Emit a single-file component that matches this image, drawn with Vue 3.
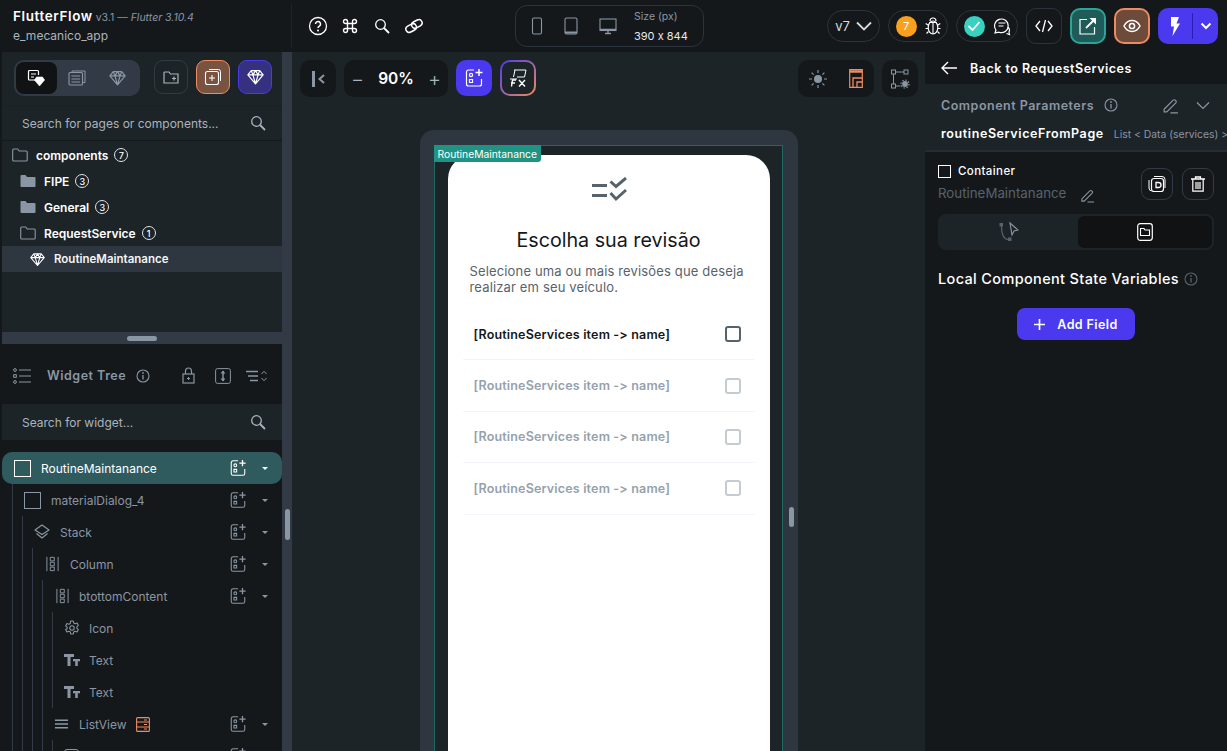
<template>
  <div class="app">
    <!-- shared icons -->
    <svg class="defs" width="0" height="0">
      <defs>
        <symbol id="i-add" viewBox="0 0 20 20">
          <path d="M10 2H4.500A2 2 0 0 0 2.500 4v12a2 2 0 0 0 2 2h11a2 2 0 0 0 2-2v-5" fill="none" stroke="currentColor" stroke-width="1.200" />
          <path d="M15 1v7M11.500 4.500h7" fill="none" stroke="currentColor" stroke-width="1.500" />
          <circle cx="7" cy="7" r="1.600" fill="none" stroke="currentColor" stroke-width="1.200" />
          <path d="M5.500 11.500h3v3h-3z" fill="none" stroke="currentColor" stroke-width="1.200" />
        </symbol>
        <symbol id="i-search" viewBox="0 0 16 16">
          <circle cx="6.500" cy="6.500" r="4.800" fill="none" stroke="currentColor" stroke-width="1.300" />
          <path d="M10 10l5 5" stroke="currentColor" stroke-width="1.800" />
        </symbol>
        <symbol id="i-gem" viewBox="0 0 20 18">
          <path d="M5 1.500h10l4 5-9 10.500L1 6.500zM1 6.500h18M7 6.500l3 10.500 3-10.500M5 1.500l2 5 3-5 3 5 2-5" fill="none" stroke="currentColor" stroke-width="1.400" stroke-linejoin="round" />
        </symbol>
        <symbol id="i-info" viewBox="0 0 14 14">
          <circle cx="7" cy="7" r="6" fill="none" stroke="currentColor" stroke-width="1.100" />
          <path d="M7 6v4.500" stroke="currentColor" stroke-width="1.300" />
          <circle cx="7" cy="3.900" r="0.900" fill="currentColor" />
        </symbol>
        <symbol id="i-folder" viewBox="0 0 16 14">
          <path d="M.7 2a1 1 0 0 1 1-1h4l1.500 2h7a1 1 0 0 1 1 1v8a1 1 0 0 1-1 1H1.700a1 1 0 0 1-1-1z" fill="none" stroke="currentColor" stroke-width="1.100" />
        </symbol>
        <symbol id="i-folder-fill" viewBox="0 0 16 14">
          <path d="M.5 2a1 1 0 0 1 1-1h4l1.500 2h7.500a1 1 0 0 1 1 1v8a1 1 0 0 1-1 1h-13a1 1 0 0 1-1-1z" fill="currentColor" />
        </symbol>
        <symbol id="i-pencil" viewBox="0 0 16 16">
          <path d="M2 11.500L10.500 3a1.400 1.400 0 0 1 2 0l.5.500a1.400 1.400 0 0 1 0 2L4.500 14H2zM8 15h7" fill="none" stroke="currentColor" stroke-width="1.100" />
        </symbol>
        <symbol id="i-column" viewBox="0 0 14 18">
          <path d="M.7 1v16M13.300 1v16" stroke="currentColor" stroke-width="1.100" />
          <path d="M4.500 1.500h4.500v4H4.500zM4.500 7h4.500v4H4.500zM4.500 12.500h4.500v4H4.500z" fill="none" stroke="currentColor" stroke-width="1.100" />
        </symbol>
        <symbol id="i-text" viewBox="0 0 16 12">
          <path d="M0 0h10v3H6.500v9h-3V3H0zM9 5h7v2.200h-2.200V12h-2.600V7.200H9z" fill="currentColor" />
        </symbol>
        <symbol id="i-stack" viewBox="0 0 16 16">
          <path d="M8 1l7 5-7 4.500L1 6zM2.500 9.500L8 14l5.500-4.500" fill="none" stroke="currentColor" stroke-width="1.200" stroke-linejoin="round" />
        </symbol>
        <symbol id="i-gear" viewBox="0 0 16 16">
          <circle cx="8" cy="8" r="2.200" fill="none" stroke="currentColor" stroke-width="1.100" />
          <path d="M6.700 1h2.600l.4 2 1.500.8 1.900-.7 1.300 2.300-1.500 1.300v1.600l1.500 1.300-1.300 2.300-1.900-.7-1.500.8-.4 2H6.700l-.4-2-1.500-.8-1.900.7-1.300-2.300L3.100 8.800V7.200L1.600 5.900l1.300-2.300 1.900.7 1.500-.8z" fill="none" stroke="currentColor" stroke-width="1.100" stroke-linejoin="round" />
        </symbol>
        <symbol id="i-list" viewBox="0 0 16 10">
          <path d="M1 1h14M1 5h14M1 9h14" stroke="currentColor" stroke-width="1.500" />
        </symbol>
      </defs>
    </svg>

    <header class="topbar">
      <div class="brand">
        <div class="brand-line">
          <span class="brand-name">FlutterFlow</span>
          <span class="brand-version">v3.1 — <em>Flutter 3.10.4</em></span>
        </div>
        <div class="brand-project">e_mecanico_app</div>
      </div>
      <div class="top-tools">
        <svg width="20" height="20" viewBox="0 0 20 20"><circle cx="10" cy="10" r="8.500" fill="none" stroke="currentColor" stroke-width="1.300" /><path d="M7.500 8a2.500 2.500 0 1 1 3.800 2.100c-.9.600-1.300 1-1.300 2" fill="none" stroke="currentColor" stroke-width="1.500" /><circle cx="10" cy="14.500" r="1" fill="currentColor" /></svg>
        <svg width="16" height="16" viewBox="0 0 16 16"><path d="M5.500 5.500h5v5h-5zM5.500 5.500H3.500a2 2 0 1 1 2-2zM10.500 5.500V3.500a2 2 0 1 1 2 2zM10.500 10.500h2a2 2 0 1 1-2 2zM5.500 10.500v2a2 2 0 1 1-2-2z" fill="none" stroke="currentColor" stroke-width="1.400" /></svg>
        <svg class="top-search" width="16" height="16"><use href="#i-search" /></svg>
        <svg width="20" height="16" viewBox="0 0 20 16"><g fill="none" stroke="currentColor" stroke-width="1.500" transform="rotate(-28 10 8)"><rect x="1" y="5.200" width="11" height="6.600" rx="3.300" /><rect x="8" y="4.200" width="11" height="6.600" rx="3.300" /></g></svg>
      </div>
      <div class="device-box">
        <svg width="12" height="18" viewBox="0 0 12 18"><rect x="1.500" y="1" width="9" height="16" rx="1.500" fill="none" stroke="currentColor" stroke-width="1.100" /></svg>
        <svg width="14" height="18" viewBox="0 0 14 18"><rect x="1" y="1" width="12" height="16" rx="1.500" fill="none" stroke="currentColor" stroke-width="1.100" /><path d="M1 15.500h12" stroke="currentColor" stroke-width="2" /></svg>
        <svg width="18" height="18" viewBox="0 0 18 18"><rect x="1" y="2" width="16" height="11.500" fill="none" stroke="currentColor" stroke-width="1.100" /><path d="M1 12.500h16M9 13.500v3M6 16.500h6" stroke="currentColor" stroke-width="1.300" /></svg>
        <div class="device-size">
          <span>Size (px)</span>
          <strong>390 x 844</strong>
        </div>
      </div>
      <div class="top-actions">
        <div class="pill version">v7
          <svg width="16" height="10" viewBox="0 0 16 10"><path d="M1 1.500l7 7 7-7" fill="none" stroke="currentColor" stroke-width="1.800" /></svg>
        </div>
        <div class="pill debug">
          <span class="count">7</span>
          <svg width="16" height="20" viewBox="0 0 16 20"><ellipse cx="8" cy="11.500" rx="4.800" ry="6.500" fill="none" stroke="currentColor" stroke-width="1.200" /><path d="M4.500 6.500h7M8 6.500V18M5 5a3 3 0 0 1 6 0M3 9L.7 7.500M13 9l2.300-1.500M3 12.500H.5M13 12.500h2.500M3.500 15.500L1.500 17.500M12.500 15.500l2 2" fill="none" stroke="currentColor" stroke-width="1.100" /></svg>
        </div>
        <div class="pill check">
          <span class="tick">
            <svg width="14" height="12" viewBox="0 0 14 12"><path d="M1.500 6l4 4 7-8" fill="none" stroke="#fff" stroke-width="1.800" /></svg>
          </span>
          <svg width="18" height="20" viewBox="0 0 18 20"><path d="M3 14a6.800 6.800 0 1 1 3 2.200L2 17zM5.500 7h7M5.500 10h5M15 11c2 2 1.500 4 1 5l.5 2.500-3-1" fill="none" stroke="currentColor" stroke-width="1.200" /></svg>
        </div>
        <div class="square code">
          <svg width="18" height="14" viewBox="0 0 18 14"><path d="M5 2L1 7l4 5M13 2l4 5-4 5M10.500 1l-3 12" fill="none" stroke="currentColor" stroke-width="1.300" /></svg>
        </div>
        <div class="square teal">
          <svg width="18" height="18" viewBox="0 0 18 18"><path d="M8 2.500H1v14.500h14.500v-7" fill="none" stroke="currentColor" stroke-width="1.200" /><path d="M7 11L15 3" stroke="currentColor" stroke-width="1.800" /><path d="M10.500 1H17v6.500z" fill="currentColor" /></svg>
        </div>
        <div class="square orange">
          <svg width="18" height="14" viewBox="0 0 18 14"><path d="M1 7c2-3.800 5-5.500 8-5.500s6 1.700 8 5.500c-2 3.800-5 5.500-8 5.500S3 10.800 1 7z" fill="none" stroke="currentColor" stroke-width="1.500" /><circle cx="9" cy="7" r="2.600" fill="none" stroke="currentColor" stroke-width="1.500" /></svg>
        </div>
        <div class="run">
          <span class="run-main">
            <svg width="10" height="19" viewBox="0 0 10 19"><path d="M1 0h8L6.500 6.500H10L2.500 19 4 9.500H1z" fill="#fff" /></svg>
          </span>
          <span class="run-more">
            <svg width="12" height="8" viewBox="0 0 12 8"><path d="M1.500 1.500L6 6l4.500-4.500" fill="none" stroke="#fff" stroke-width="2" /></svg>
          </span>
        </div>
      </div>
    </header>

    <div class="workspace">
      <aside class="left">
        <div class="left-inner">
          <div class="nav-tools">
            <div class="segment">
              <span class="seg active">
                <svg width="18" height="18" viewBox="0 0 18 18"><path d="M10 11H2.500a1 1 0 0 1-1-1V2.500a1 1 0 0 1 1-1h8a1 1 0 0 1 1 1V6M4 5h5M4 8h3" fill="none" stroke="#fff" stroke-width="1.200" /><path d="M9.500 8h6L17.500 11 12.500 17 7.500 11zM7.500 11h10" fill="#fff" stroke="#fff" stroke-width=".6" /></svg>
              </span>
              <span class="seg">
                <svg width="18" height="16" viewBox="0 0 18 16"><path d="M4 2.500V1h13v11.500h-2" fill="none" stroke="currentColor" stroke-width="1" /><rect x="1" y="2.500" width="13.500" height="12.500" rx="1" fill="none" stroke="currentColor" stroke-width="1.100" /><path d="M3.500 6h8.500M3.500 9h8.500M3.500 12h8.500" stroke="currentColor" stroke-width="1.100" /></svg>
              </span>
              <span class="seg">
                <svg width="17" height="16"><use href="#i-gem" /></svg>
              </span>
            </div>
            <span class="tool-btn outline">
              <svg width="16" height="13" viewBox="0 0 16 13"><path d="M1 2a1 1 0 0 1 1-1h4l1.500 2H15v9H1z" fill="none" stroke="currentColor" stroke-width="1.200" /><path d="M11 5.500v4M9 7.500h4" stroke="currentColor" stroke-width="1.200" /></svg>
            </span>
            <span class="tool-btn tint-orange">
              <svg width="18" height="18" viewBox="0 0 18 18"><path d="M5 1.500h9.500a2 2 0 0 1 2 2V13" fill="none" stroke="#fff" stroke-width="1" /><rect x="1.500" y="3.500" width="13" height="13" rx="2" fill="none" stroke="#fff" stroke-width="1.100" /><path d="M8 7v6M5 10h6" stroke="#fff" stroke-width="1.100" /></svg>
            </span>
            <span class="tool-btn tint-purple">
              <svg width="17" height="16" class="white"><use href="#i-gem" /></svg>
            </span>
          </div>
          <div class="search-row">
            <span>Search for pages or components...</span>
            <svg width="16" height="16"><use href="#i-search" /></svg>
          </div>
          <div class="pages">
            <div v-for="f in folders" :key="f.name" class="folder-row" :class="[f.kind]">
              <svg v-if="f.kind === 'comp'" width="15" height="15" class="gem"><use href="#i-gem" /></svg>
              <svg v-else width="16" height="14" class="folder"><use :href="f.filled ? '#i-folder-fill' : '#i-folder'" /></svg>
              <span class="folder-name">{{ f.name }}</span>
              <span v-if="f.count" class="badge">{{ f.count }}</span>
            </div>
          </div>
          <div class="h-split"><span></span></div>
          <div class="tree-head">
            <svg width="18" height="16" viewBox="0 0 18 16"><path d="M6 2h12M6 8h12M6 14h12" stroke="currentColor" stroke-width="1" /><circle cx="2" cy="2" r="1.400" fill="none" stroke="currentColor" /><rect x=".7" y="6.700" width="2.600" height="2.600" fill="none" stroke="currentColor" /><circle cx="2" cy="14" r="1.400" fill="none" stroke="currentColor" /></svg>
            <span class="tree-title">Widget Tree</span>
            <svg class="info" width="14" height="14"><use href="#i-info" /></svg>
            <div class="tree-head-tools">
              <svg width="13" height="17" viewBox="0 0 13 17"><path d="M3.500 7V4a3 3 0 0 1 6 0v3" fill="none" stroke="currentColor" stroke-width="1.200" /><rect x="1" y="7" width="11" height="9" fill="none" stroke="currentColor" stroke-width="1.200" /><path d="M5 11.500h3M6.500 10v3" stroke="currentColor" stroke-width="1" /></svg>
              <svg width="16" height="16" viewBox="0 0 16 16"><rect x=".6" y=".6" width="14.800" height="14.800" rx="2" fill="none" stroke="currentColor" stroke-width="1" /><path d="M8 3v10" stroke="currentColor" stroke-width="1.500" /><path d="M5.500 5.500L8 2.500l2.500 3zM5.500 10.500L8 13.500l2.500-3z" fill="currentColor" /></svg>
              <svg class="sort" width="21" height="12" viewBox="0 0 21 12"><path d="M0 1.500h12M2 6h10M4 10.500h8" stroke="currentColor" stroke-width="1.500" /><path d="M15.500 4l2.500-2.700L20.500 4M15.500 8l2.500 2.700L20.500 8" fill="none" stroke="currentColor" /></svg>
            </div>
          </div>
          <div class="search-row second">
            <span>Search for widget...</span>
            <svg width="16" height="16"><use href="#i-search" /></svg>
          </div>
          <div class="tree">
            <div v-for="row in widgetRows" :key="row.top" class="tree-row" :class="{ selected: row.selected }">
              <span v-for="n in row.guides" :key="n" class="guide"></span>
              <span class="tree-icon" :style="{ width: iconSlot(row.guides) + 'px' }">
                <span v-if="row.icon === 'box'" class="box-icon"></span>
                <span v-else-if="row.icon === 'tile'" class="tile-icon"></span>
                <svg v-else-if="row.icon === 'stack'" width="16" height="16"><use href="#i-stack" /></svg>
                <svg v-else-if="row.icon === 'column'" class="column-icon" width="13" height="16"><use href="#i-column" /></svg>
                <svg v-else-if="row.icon === 'gear'" width="16" height="16"><use href="#i-gear" /></svg>
                <svg v-else-if="row.icon === 'text'" width="16" height="12"><use href="#i-text" /></svg>
                <svg v-else-if="row.icon === 'list'" width="15" height="10"><use href="#i-list" /></svg>
              </span>
              <span class="tree-name">{{ row.name }}</span>
              <svg v-if="row.flag" class="flag" width="14" height="15" viewBox="0 0 14 15"><rect x=".6" y=".6" width="12.800" height="13.800" rx="1" fill="none" stroke="#ee8b60" stroke-width="1.100" /><path d="M.6 5h12.800M.6 10h12.800M8 3h3M8 7.500h3M8 12h3" stroke="#ee8b60" stroke-width="1" /></svg>
              <template v-if="row.add">
                <svg class="row-add" width="18" height="18"><use href="#i-add" /></svg>
                <span class="caret"></span>
              </template>
            </div>
          </div>
        </div>
        <div class="v-split"><span></span></div>
      </aside>

      <main class="canvas">
        <div class="canvas-tools">
          <div class="tool-group square-tool">
            <svg width="14" height="16" viewBox="0 0 14 16"><path d="M1 0h3v16H1z" fill="#8a96a3" /><path d="M13 4L8.500 8l4.500 4" fill="none" stroke="#8a96a3" stroke-width="2" /></svg>
          </div>
          <div class="tool-group zoom">
            <span class="zoom-sign">−</span>
            <strong>90%</strong>
            <span class="zoom-sign">+</span>
          </div>
          <div class="add-widget">
            <svg width="20" height="20" class="white"><use href="#i-add" /></svg>
          </div>
          <div class="fx-btn">
            <svg width="20" height="20" viewBox="0 0 20 20"><path d="M6 2h12l-1.500 7H9M7 2L5.500 9M13 2v0M2 11h7" fill="none" stroke="#fff" stroke-width="1" /><path d="M8 12H4.500l-1 6.500M3 15h4M11 12l6 6.500M17 12l-6 6.500" fill="none" stroke="#fff" stroke-width="1.400" /></svg>
          </div>
          <div class="canvas-right">
            <div class="tool-group theme">
              <svg width="18" height="18" viewBox="0 0 18 18"><circle cx="9" cy="9" r="4" fill="#8a96a3" /><path d="M9 0v3M9 15v3M0 9h3M15 9h3M2.600 2.600l2 2M13.400 13.400l2 2M2.600 15.400l2-2M13.400 4.600l2-2" stroke="#8a96a3" stroke-width="1.200" /></svg>
              <svg width="14" height="19" viewBox="0 0 14 19"><path d="M.7.700h12.600v17.600H.7z" fill="none" stroke="#ee8b60" stroke-width="1.200" /><path d="M.7 2.500h12.600" stroke="#ee8b60" stroke-width="2.500" /><path d="M4 18V9h9.300M8 18v-5h5.300" fill="none" stroke="#ee8b60" stroke-width="1.300" /></svg>
            </div>
            <div class="tool-group square-tool">
              <svg width="20" height="20" viewBox="0 0 20 20"><path d="M3.500 5v10M5.500 3h8.500" stroke="#8a96a3" stroke-width="1" /><rect x="1.500" y="1" width="4" height="4" fill="none" stroke="#8a96a3" /><rect x="14" y="1" width="4" height="4" fill="none" stroke="#8a96a3" /><rect x="1.500" y="15" width="4" height="4" fill="none" stroke="#8a96a3" /><path d="M5.500 17h5" stroke="#8a96a3" /><circle cx="15" cy="15" r="2.900" fill="#8a96a3" /><circle cx="15" cy="15" r="4" fill="none" stroke="#8a96a3" stroke-width="1.200" stroke-dasharray="1.500 1.600" /></svg>
            </div>
          </div>
        </div>

        <div class="device">
          <div class="selection">
            <span class="selection-tag">RoutineMaintanance</span>
            <div class="sheet">
              <svg class="sheet-icon" width="36" height="26" viewBox="0 0 36 26">
                <path d="M1 8.500h15M1 18.500h15" stroke="#57636c" stroke-width="3" />
                <path d="M19.500 4.500l5.500 5L35 1M19.500 16l5.500 6L35 13" fill="none" stroke="#57636c" stroke-width="3" />
              </svg>
              <h1>Escolha sua revisão</h1>
              <p>Selecione uma ou mais revisões que deseja realizar em seu veículo.</p>
              <div class="service-list">
                <div v-for="(s, i) in services" :key="i" class="service" :class="{ dim: i > 0 }">
                  <span>{{ s }}</span>
                  <i class="checkbox"></i>
                </div>
              </div>
            </div>
          </div>
        </div>
        <span class="canvas-handle"></span>
      </main>

      <aside class="right">
        <div class="back-row">
          <svg width="16" height="14" viewBox="0 0 16 14"><path d="M7 1L1 7l6 6M1 7h15" fill="none" stroke="#fff" stroke-width="1.400" /></svg>
          <span>Back to RequestServices</span>
        </div>
        <div class="params">
          <div class="params-head">
            <span class="params-title">Component Parameters</span>
            <svg width="14" height="14" class="info"><use href="#i-info" /></svg>
            <svg width="17" height="17" class="pencil"><use href="#i-pencil" /></svg>
            <svg width="14" height="9" viewBox="0 0 14 9" class="chev"><path d="M1 1.500l6 6 6-6" fill="none" stroke="currentColor" stroke-width="1.200" /></svg>
          </div>
          <div class="param-line">
            <strong>routineServiceFromPage</strong>
            <span>List &lt; Data (services) &gt;</span>
          </div>
        </div>
        <div class="container-row">
          <div class="container-info">
            <div class="container-type"><span class="box-small"></span>Container</div>
            <div class="container-name">RoutineMaintanance
              <svg width="15" height="15"><use href="#i-pencil" /></svg>
            </div>
          </div>
          <span class="small-btn">
            <svg width="18" height="18" viewBox="0 0 18 18"><path d="M6 1.500h8a3 3 0 0 1 3 3V13" fill="none" stroke="#fff" stroke-width="1" /><rect x="3.500" y="3.500" width="12" height="13" rx="2.500" fill="none" stroke="#fff" stroke-width="1.200" /><path d="M1 5v8a3 3 0 0 0 2.500 3" fill="none" stroke="#fff" stroke-width="1" /><path d="M8 7.500h2.500a2 2 0 0 1 0 5H8z" fill="none" stroke="#fff" stroke-width="1.300" /></svg>
          </span>
          <span class="small-btn">
            <svg width="14" height="16" viewBox="0 0 14 16"><path d="M0 3h14M4.500 3V1h5v2" fill="none" stroke="#fff" stroke-width="1.300" /><path d="M1.800 3v12.200h10.400V3M5 6v7M7 6v7M9 6v7" fill="none" stroke="#fff" stroke-width="1.200" /></svg>
          </span>
        </div>
        <div class="tabs">
          <span class="tab first">
            <svg width="20" height="20" viewBox="0 0 20 20"><rect x=".5" y="1" width="3.500" height="3.500" fill="#57636c" /><rect x="9" y="15.500" width="3.500" height="3.500" fill="#57636c" /><path d="M2.500 4c0 7 2 13 6.500 13.500" fill="none" stroke="#57636c" stroke-width="1.100" /><path d="M11 1l8 7-4 1-2 4z" fill="none" stroke="#8a96a3" stroke-width="1.100" /></svg>
          </span>
          <span class="tab active">
            <svg width="16" height="18" viewBox="0 0 16 18"><rect x=".7" y=".7" width="14.600" height="16.600" rx="2.500" fill="none" stroke="#fff" stroke-width="1.200" /><path d="M3.500 7V5.500h3.500L8 7h4.500v5.500h-9z" fill="none" stroke="#fff" stroke-width="1.100" /></svg>
          </span>
        </div>
        <div class="state-title">
          Local Component State Variables
          <svg width="14" height="14" class="info"><use href="#i-info" /></svg>
        </div>
        <div class="add-field-wrap">
          <button class="add-field">
            <svg width="11" height="11" viewBox="0 0 11 11"><path d="M5.500 0v11M0 5.500h11" stroke="#fff" stroke-width="1.700" /></svg>
            Add Field
          </button>
        </div>
      </aside>
    </div>
  </div>
</template>

<script setup>
const folders = [
  { name: "components", count: 7, kind: "top" },
  { name: "FIPE", count: 3, kind: "sub", filled: true },
  { name: "General", count: 3, kind: "sub", filled: true },
  { name: "RequestService", count: 1, kind: "sub" },
  { name: "RoutineMaintanance", kind: "comp" },
];

const widgetRows = [
  { name: "RoutineMaintanance", guides: 0, icon: "box", add: true, selected: true, top: 0 },
  { name: "materialDialog_4", guides: 1, icon: "box", add: true, top: 1 },
  { name: "Stack", guides: 2, icon: "stack", add: true, top: 2 },
  { name: "Column", guides: 3, icon: "column", add: true, top: 3 },
  { name: "btottomContent", guides: 4, icon: "column", add: true, top: 4 },
  { name: "Icon", guides: 5, icon: "gear", top: 5 },
  { name: "Text", guides: 5, icon: "text", top: 6 },
  { name: "Text", guides: 5, icon: "text", top: 7 },
  { name: "ListView", guides: 4, icon: "list", add: true, flag: true, top: 8 },
  // cut off by the bottom of the window
  { name: "", guides: 5, icon: "tile", add: true, top: 9 },
];

const services = Array(4).fill("[RoutineServices item -> name]");

// labels creep left a little on deeper levels
function iconSlot(guides) {
  if (guides >= 4) return 27;
  if (guides >= 2) return 28;
  return 29;
}
</script>

<style>
html,
body {
  margin: 0;
  background: #14181b;
  overflow: hidden;
}
</style>

<style scoped>
.app {
  width: 1227px;
  height: 751px;
  overflow: hidden;
  display: flex;
  flex-direction: column;
  background: #14181b;
  color: #fff;
  font-family: Inter, "Noto Sans", sans-serif;
  font-size: 13px;
  font-feature-settings: "calt" 0;
}
.defs {
  position: absolute;
}
svg {
  display: block;
  flex: none;
}
.white {
  color: #fff;
}

/* top bar */
.topbar {
  height: 52px;
  flex: none;
  display: flex;
  align-items: center;
  background: #14181b;
}
.brand {
  width: 292px;
  height: 44px;
  flex: none;
  box-sizing: border-box;
  padding: 4px 0 0 13px;
  border-right: 1px solid #1e252a;
}
.brand-line {
  display: flex;
  align-items: baseline;
  gap: 3px;
}
.brand-name {
  font-size: 13.500px;
  font-weight: 600;
  letter-spacing: 0.6px;
}
.brand-version {
  font-size: 10.500px;
  color: #8a96a3;
}
.brand-project {
  margin-top: 4px;
  font-size: 12px;
  color: #aab4bd;
}
.top-tools {
  width: 223px;
  flex: none;
  box-sizing: border-box;
  padding-left: 16px;
  display: flex;
  align-items: center;
  gap: 14px;
  color: #fff;
}
.top-search {
  margin-left: 2px;
}
.device-box {
  width: 189px;
  height: 42px;
  flex: none;
  box-sizing: border-box;
  border: 1px solid #2b333c;
  border-radius: 12px;
  display: flex;
  align-items: center;
  padding-left: 15px;
  gap: 21px;
  color: #8a96a3;
}
.device-size {
  display: flex;
  flex-direction: column;
  gap: 6px;
  font-size: 10.500px;
  margin-left: -4px;
}
.device-size strong {
  font-weight: 400;
  color: #e6e9ec;
  font-size: 11px;
}
.top-actions {
  margin-left: 123px;
  display: flex;
  align-items: center;
  gap: 8px;
}
.pill {
  height: 32px;
  box-sizing: border-box;
  border: 1px solid #2b333c;
  border-radius: 16px;
  display: flex;
  align-items: center;
  justify-content: center;
  gap: 6px;
}
.version {
  width: 53px;
  font-size: 13px;
  color: #d5dade;
}
.debug {
  width: 60px;
  gap: 8px;
}
.check {
  width: 62px;
  gap: 8px;
}
.count {
  width: 21px;
  height: 21px;
  border-radius: 50%;
  background: #f9a11f;
  font-size: 11px;
  display: flex;
  align-items: center;
  justify-content: center;
}
.tick {
  width: 21px;
  height: 21px;
  border-radius: 50%;
  background: #39d2c0;
  display: flex;
  align-items: center;
  justify-content: center;
}
.square {
  width: 36px;
  height: 36px;
  box-sizing: border-box;
  border-radius: 10px;
  display: flex;
  align-items: center;
  justify-content: center;
}
.code {
  border: 1px solid #2b333c;
}
.teal {
  background: #1f5b58;
  border: 2px solid #2aa596;
}
.orange {
  background: #6d4a3a;
  border: 2px solid #ee8b60;
}
.run {
  width: 60px;
  height: 36px;
  border-radius: 10px;
  background: #4b39ef;
  display: flex;
  align-items: center;
}
.run-main {
  width: 34px;
  display: flex;
  justify-content: center;
}
.run-more {
  height: 26px;
  flex: 1;
  border-left: 1px solid #2a1db0;
  display: flex;
  align-items: center;
  justify-content: center;
}

.workspace {
  flex: 1;
  min-height: 0;
  display: flex;
}

/* left column */
.left {
  width: 292px;
  flex: none;
  display: flex;
  box-sizing: border-box;
  padding-left: 2px;
}
.left-inner {
  width: 280px;
  display: flex;
  flex-direction: column;
  background: #1d2428;
}
.v-split {
  width: 10px;
  background: #323b45;
  position: relative;
}
.v-split span {
  position: absolute;
  left: 3px;
  top: 457px;
  width: 5px;
  height: 31px;
  border-radius: 3px;
  background: #8a96a3;
}
.nav-tools {
  height: 54px;
  flex: none;
  box-sizing: border-box;
  padding: 8px 0 0 12px;
  display: flex;
  gap: 8px;
  align-items: flex-start;
  border-bottom: 1px solid #1a2024;
}
.segment {
  width: 126px;
  height: 36px;
  box-sizing: border-box;
  padding: 2px;
  border-radius: 10px;
  background: #323b45;
  display: flex;
  margin-right: 6px;
  color: #8a96a3;
}
.seg {
  width: 41px;
  display: flex;
  align-items: center;
  justify-content: center;
  border-radius: 8px;
}
.seg.active {
  background: #101214;
}
.tool-btn {
  width: 34px;
  height: 34px;
  box-sizing: border-box;
  border-radius: 9px;
  display: flex;
  align-items: center;
  justify-content: center;
}
.outline {
  border: 1px solid #323b45;
  color: #aab4bd;
}
.tint-orange {
  background: #7a5240;
  border: 1.500px solid #ee8b60;
}
.tint-purple {
  background: #35307f;
  border: 1.500px solid #4b39ef;
}
.search-row {
  height: 35px;
  flex: none;
  box-sizing: border-box;
  padding: 0 16px 0 20px;
  display: flex;
  align-items: center;
  justify-content: space-between;
  color: #aab4bd;
  font-size: 12px;
  border-bottom: 1px solid #14181b;
}
.search-row.second {
  height: 36px;
  border-bottom: none;
}
.pages {
  height: 191px;
  flex: none;
  box-sizing: border-box;
  padding-top: 1px;
}
.folder-row {
  height: 26px;
  display: flex;
  align-items: center;
  font-size: 12px;
  font-weight: 600;
}
.folder {
  color: #8a96a3;
}
.folder-row.top {
  padding-left: 10px;
}
.folder-row.sub {
  padding-left: 18px;
}
.folder-row.comp {
  padding-left: 28px;
  background: #2e3640;
  color: #f3f5f6;
}
.folder-name {
  margin-left: 8px;
}
.comp .folder-name {
  margin-left: 9px;
  font-size: 11.500px;
}
.gem {
  color: #fff;
}
.badge {
  width: 14px;
  height: 14px;
  margin-left: 6px;
  box-sizing: border-box;
  border: 1px solid #dfe3e6;
  border-radius: 50%;
  font-size: 9px;
  font-weight: 500;
  display: flex;
  align-items: center;
  justify-content: center;
}
.h-split {
  height: 12px;
  flex: none;
  background: #323b45;
  display: flex;
  align-items: center;
  justify-content: center;
}
.h-split span {
  width: 30px;
  height: 5px;
  border-radius: 3px;
  background: #8a96a3;
}
.tree-head {
  height: 60px;
  flex: none;
  box-sizing: border-box;
  padding: 3px 0 0 11px;
  display: flex;
  align-items: center;
  background: #14181b;
  color: #8a96a3;
}
.tree-title {
  margin-left: 16px;
  font-weight: 600;
  font-size: 12.500px;
  letter-spacing: 0.5px;
}
.info {
  color: #8a96a3;
  margin-left: 10px;
}
.tree-head-tools {
  margin-left: 32px;
  display: flex;
  align-items: center;
  gap: 20px;
}
.sort {
  margin-left: -5px;
}
.tree {
  flex: 1;
  min-height: 0;
  overflow: hidden;
  background: #14181b;
  padding-top: 12px;
}
.tree-row {
  height: 32px;
  display: flex;
  align-items: stretch;
  padding-left: 10px;
  padding-right: 14px;
  color: #8a96a3;
}
.tree-row.selected {
  background: #2f5a5e;
  border-radius: 10px;
  color: #fff;
}
.guide {
  width: 10px;
  flex: none;
  box-sizing: border-box;
  border-left: 1px solid #323b45;
}
.tree-icon {
  flex: none;
  box-sizing: border-box;
  padding-left: 2px;
  display: flex;
  align-items: center;
}
.box-icon {
  width: 17px;
  height: 17px;
  box-sizing: border-box;
  border: 1px solid currentColor;
}
.tile-icon {
  width: 15px;
  height: 15px;
  box-sizing: border-box;
  border: 1px solid currentColor;
  border-radius: 3px;
}
.column-icon {
  margin-left: 2px;
}
.tree-name {
  align-self: center;
  font-size: 12px;
}
.flag {
  align-self: center;
  margin-left: 9px;
}
.row-add {
  align-self: center;
  margin-left: auto;
  margin-right: 15px;
}
.caret {
  align-self: center;
  width: 0;
  height: 0;
  border-left: 3.500px solid transparent;
  border-right: 3.500px solid transparent;
  border-top: 3.500px solid currentColor;
}

/* canvas */
.canvas {
  flex: 1;
  min-width: 0;
  background: #1d2428;
  position: relative;
  display: flex;
  flex-direction: column;
  align-items: center;
  overflow: hidden;
}
.canvas-tools {
  align-self: stretch;
  flex: none;
  height: 78px;
  box-sizing: border-box;
  padding: 8px 7px 0 8px;
  display: flex;
  align-items: flex-start;
  gap: 8px;
}
.tool-group {
  height: 37px;
  border-radius: 10px;
  background: #14181b;
  display: flex;
  align-items: center;
  justify-content: center;
}
.square-tool {
  width: 36px;
}
.zoom {
  width: 104px;
  justify-content: space-between;
  box-sizing: border-box;
  padding: 0 7px;
}
.zoom strong {
  font-size: 15.500px;
  font-weight: 600;
}
.zoom-sign {
  font-size: 20px;
  font-weight: 300;
  color: #aab4bd;
}
.add-widget {
  width: 36px;
  height: 36px;
  border-radius: 10px;
  background: #4b39ef;
  display: flex;
  align-items: center;
  justify-content: center;
}
.fx-btn {
  width: 36px;
  height: 36px;
  box-sizing: border-box;
  border-radius: 10px;
  border: 2px solid transparent;
  background: linear-gradient(#1d2428, #1d2428) padding-box, linear-gradient(135deg, #4b39ef, #ee8b60) border-box;
  display: flex;
  align-items: center;
  justify-content: center;
}
.canvas-right {
  margin-left: auto;
  display: flex;
  gap: 8px;
}
.theme {
  width: 76px;
  gap: 22px;
}
.device {
  width: 378px;
  flex: 1;
  box-sizing: border-box;
  padding: 15px 15px 0 14px;
  background: #2e3640;
  border-radius: 14px 14px 0 0;
}
.selection {
  height: 100%;
  box-sizing: border-box;
  padding: 9px 12px 0 13px;
  background: #1d2428;
  border: 1px solid #1f6b64;
  border-bottom: none;
  position: relative;
}
.selection-tag {
  position: absolute;
  left: -1px;
  top: -1px;
  height: 17px;
  padding: 0 4px;
  display: flex;
  align-items: center;
  background: #1f9484;
  border-radius: 0 0 3px 0;
  font-size: 10.300px;
  color: #fff;
  z-index: 1;
}
.sheet {
  height: 100%;
  background: #fff;
  border-radius: 24px 24px 0 0;
  display: flex;
  flex-direction: column;
  align-items: center;
  color: #14181b;
}
.sheet-icon {
  margin-top: 22px;
}
.sheet h1 {
  margin: 24px 0 0;
  font-size: 19.700px;
  line-height: 26px;
  font-weight: 400;
}
.sheet p {
  align-self: flex-start;
  margin: 10px 0 0 22px;
  width: 285px;
  font-size: 13px;
  line-height: 16px;
  letter-spacing: 0.15px;
  color: #57636c;
}
.service-list {
  align-self: stretch;
  margin: 14px 15px 0;
}
.service {
  height: 51.400px;
  box-sizing: border-box;
  padding: 0 14px 0 11px;
  display: flex;
  align-items: center;
  justify-content: space-between;
  border-bottom: 1px solid #f1f4f8;
  font-size: 12.500px;
  font-weight: 600;
  letter-spacing: 0.17px;
}
.service.dim span {
  color: #95a1ac;
}
.checkbox {
  width: 16px;
  height: 16px;
  box-sizing: border-box;
  border: 2px solid #57636c;
  border-radius: 3px;
}
.service.dim .checkbox {
  border-color: #c4cbd1;
}
.canvas-handle {
  position: absolute;
  left: 497px;
  top: 455px;
  width: 5px;
  height: 20px;
  border-radius: 3px;
  background: #8a96a3;
}

/* right panel */
.right {
  width: 302px;
  flex: none;
  background: #14181b;
}
.back-row {
  height: 32px;
  box-sizing: border-box;
  padding-left: 16px;
  display: flex;
  align-items: center;
  gap: 13px;
  font-size: 12.500px;
  font-weight: 600;
  letter-spacing: 0.5px;
}
.params {
  height: 68px;
  box-sizing: border-box;
  padding: 0 0 0 16px;
  background: #1d2428;
  border-bottom: 2px solid #252d33;
  overflow: hidden;
}
.params-head {
  height: 42px;
  display: flex;
  align-items: center;
  color: #8a96a3;
}
.params-title {
  font-size: 12.500px;
  font-weight: 600;
  letter-spacing: 0.5px;
}
.pencil {
  margin-left: 44px;
}
.chev {
  margin-left: 17px;
}
.param-line {
  display: flex;
  align-items: baseline;
  gap: 10px;
  white-space: nowrap;
}
.param-line strong {
  font-size: 12.500px;
  font-weight: 600;
  letter-spacing: 0.6px;
}
.param-line span {
  font-size: 10.400px;
  color: #8a96a3;
}
.container-row {
  display: flex;
  padding: 12px 13px 0 13px;
  align-items: flex-start;
  gap: 9px;
}
.container-info {
  flex: 1;
}
.container-type {
  display: flex;
  align-items: center;
  gap: 7px;
  font-size: 11.500px;
  font-weight: 500;
  letter-spacing: 0.4px;
}
.box-small {
  width: 13px;
  height: 13px;
  box-sizing: border-box;
  border: 1px solid #fff;
}
.container-name {
  margin-top: 4px;
  display: flex;
  align-items: center;
  gap: 14px;
  color: #57636c;
  font-size: 13.300px;
}
.container-name svg {
  color: #8a96a3;
  margin-top: 6px;
}
.small-btn {
  width: 32px;
  height: 32px;
  margin-top: 4px;
  box-sizing: border-box;
  border: 1px solid #323b45;
  border-radius: 9px;
  display: flex;
  align-items: center;
  justify-content: center;
}
.tabs {
  margin: 11px 13px 0;
  height: 36px;
  box-sizing: border-box;
  padding: 2px;
  border-radius: 8px;
  background: #1d2428;
  display: flex;
}
.tab {
  flex: 1;
  border-radius: 6px;
  display: flex;
  align-items: center;
  justify-content: center;
}
.tab.first {
  flex: none;
  width: 138px;
}
.tab.active {
  background: #101214;
}
.state-title {
  margin: 19px 0 0 13px;
  display: flex;
  align-items: center;
  font-size: 14.500px;
  font-weight: 500;
  line-height: 19px;
  letter-spacing: 0.35px;
}
.state-title .info {
  color: #57636c;
  margin-left: 5px;
}
.add-field-wrap {
  margin-top: 20px;
  display: flex;
  justify-content: center;
}
.add-field {
  width: 118px;
  height: 32px;
  border: none;
  border-radius: 8px;
  background: #4b39ef;
  color: #fff;
  font: 600 12.500px Inter, "Noto Sans", sans-serif;
  letter-spacing: 0.4px;
  display: flex;
  align-items: center;
  justify-content: center;
  gap: 12px;
}
</style>
